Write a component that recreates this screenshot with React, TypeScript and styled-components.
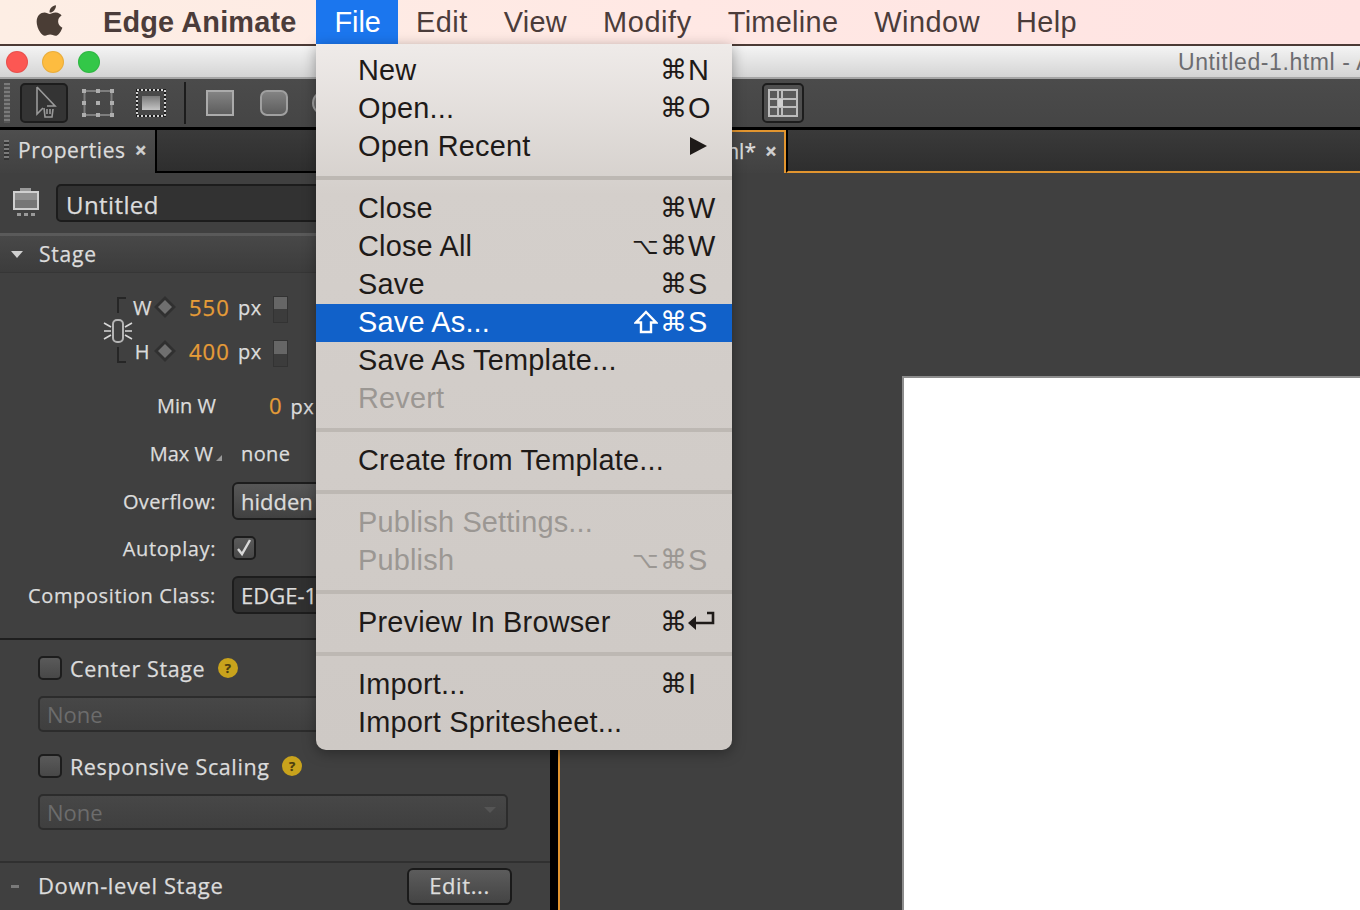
import React from "react";
import styled, { createGlobalStyle } from "styled-components";
import { FaApple } from "react-icons/fa";

const GlobalStyle = createGlobalStyle`
    html, body {
        margin: 0;
        padding: 0;
        background: #404040;
        overflow: hidden;
    }
`;

const Screen = styled.div`
    position: relative;
    width: 1360px;
    height: 910px;
    overflow: hidden;
    display: flex;
    flex-direction: column;
    font-family: "Liberation Sans", Arial, sans-serif;
`;

/* menu bar */
const MenuBar = styled.div`
    height: 44px;
    flex: none;
    display: flex;
    align-items: stretch;
    padding-left: 32px;
    background: linear-gradient(90deg, #fdeee4 0%, #ffe8e4 50%, #ffe3e2 100%);
    border-bottom: 2px solid #4b3a35;
    font-size: 28.9px;
    color: #4b3c3a;
`;

const AppleLogo = styled.span`
    width: 71px;
    padding-top: 3px;
    flex: none;
    color: #4a3d35;
    font-size: 35px;
    line-height: 38px;
`;

const AppName = styled.span`
    font-weight: 700;
    letter-spacing: 0.15px;
    line-height: 44px;
    margin-right: 20px;
`;

const MenuTitle = styled.span<{ $open?: boolean; $track?: number }>`
    padding: 0 ${(p) => (p.$open ? 17 : 18)}px 0 18px;
    line-height: 44px;
    letter-spacing: ${(p) => p.$track ?? 0}px;
    color: ${(p) => (p.$open ? "#fff" : "inherit")};
    background: ${(p) => (p.$open ? "#1b76ee" : "transparent")};
`;

/* window chrome */
const TitleBar = styled.div`
    height: 31px;
    flex: none;
    display: flex;
    align-items: center;
    gap: 14px;
    padding-left: 6px;
    background: linear-gradient(#f4f4f4, #d4d4d4);
    border-bottom: 2px solid #a5a5a5;
`;

const Light = styled.span<{ $color: string }>`
    width: 22px;
    height: 22px;
    flex: none;
    border-radius: 50%;
    background: ${(p) => p.$color};
    box-shadow: inset 0 0 0 1px rgba(0, 0, 0, 0.08);
`;

const WindowName = styled.span`
    margin: 2px 0 0 1064px;
    white-space: nowrap;
    font-size: 23px;
    letter-spacing: 0.6px;
    color: #6c6c70;
`;

const Toolbar = styled.div`
    height: 48px;
    flex: none;
    display: flex;
    align-items: center;
    background: linear-gradient(#4b4b4b, #454545);
    border-bottom: 3px solid #000;
`;

const Grip = styled.span`
    width: 6px;
    height: 40px;
    margin: 0 10px 0 4px;
    flex: none;
    background: repeating-linear-gradient(#7a7a7a 0 2px, #555 2px 4px);
`;

const ToolButton = styled.span<{ $width?: number }>`
    width: ${(p) => p.$width ?? 48}px;
    height: 40px;
    flex: none;
    display: flex;
    align-items: center;
    justify-content: center;
    border-radius: 5px;
    background: #343434;
    border: 2px solid #1d1d1d;
    box-sizing: border-box;
`;

const ToolIcon = styled.svg<{ $left: number }>`
    flex: none;
    margin-left: ${(p) => p.$left}px;
`;

const ToolDivider = styled.span`
    width: 2px;
    height: 42px;
    margin-left: 18px;
    flex: none;
    background: #1c1c1c;
`;

const GridButton = styled(ToolButton)`
    margin-left: 422px;
    background: #4f4f4f;
`;

/* panels */
const Workspace = styled.div`
    flex: 1;
    display: flex;
    min-height: 0;
`;

const LeftPanel = styled.div`
    width: 550px;
    flex: none;
    display: flex;
    flex-direction: column;
    background: #404040;
    color: #dcdcdc;
    font-family: "Open Sans", "Noto Sans", sans-serif;
    font-size: 20px;
    font-weight: 500;
    letter-spacing: 0.4px;
    -webkit-text-stroke: 0.25px;
`;

const PanelDivider = styled.div`
    width: 8px;
    flex: none;
    background: #000;
`;

const TabStrip = styled.div`
    height: 43px;
    flex: none;
    display: flex;
`;

const PropertiesTab = styled.div`
    width: 155px;
    flex: none;
    box-sizing: border-box;
    padding-bottom: 3px;
    display: flex;
    align-items: center;
    background: linear-gradient(#4e4e4e, #414141);
    font-size: 21px;
    letter-spacing: 0.6px;
`;

const TabGrip = styled.span`
    width: 5px;
    height: 20px;
    margin: 0 9px 0 4px;
    background: repeating-linear-gradient(#7a7a7a 0 2px, #333 2px 4px);
`;

const TabClose = styled.span`
    margin-left: 9px;
    font-size: 21px;
    font-weight: 700;
    color: #cfcfcf;
`;

const EmptyStrip = styled.div`
    flex: 1;
    background: linear-gradient(#3a3a3a, #2e2e2e);
    border-left: 2px solid #000;
    border-bottom: 2px solid #000;
`;

const NameRow = styled.div`
    height: 60px;
    flex: none;
    display: flex;
    align-items: center;
    padding-left: 11px;
    box-sizing: border-box;
`;

const NameField = styled.div`
    margin-left: 15px;
    flex: 1;
    height: 38px;
    box-sizing: border-box;
    padding-left: 8px;
    line-height: 38px;
    font-size: 24px;
    background: #323232;
    border: 2px solid #1c1c1c;
    border-radius: 5px;
`;

const SectionHeader = styled.div`
    height: 40px;
    flex: none;
    box-sizing: border-box;
    display: flex;
    align-items: center;
    background: linear-gradient(#484848, #3c3c3c);
    border-top: 3px solid #5a5a5a;
    border-bottom: 1px solid #363636;
    padding-left: 11px;
    font-size: 21px;
    letter-spacing: 0.8px;
`;

const Caret = styled.span`
    width: 0;
    height: 0;
    margin-right: 16px;
    border-left: 6px solid transparent;
    border-right: 6px solid transparent;
    border-top: 7px solid #d0d0d0;
`;

const StageForm = styled.div`
    flex: none;
    box-sizing: border-box;
    padding: 12px 0 19px;
    border-bottom: 2px solid #1e1e1e;
`;

const DimGroup = styled.div`
    display: flex;
    padding-left: 103px;
    margin-bottom: 8px;
`;

const DimRows = styled.div`
    display: flex;
    flex-direction: column;
`;

const DimRow = styled.div`
    height: 44px;
    display: grid;
    grid-template-columns: 17px 39px 49px 35px 16px;
    align-items: center;
`;

const DimLabel = styled.span`
    text-align: right;
`;

const DimDiamond = styled.svg`
    margin-left: 4px;
`;

const Value = styled.span`
    color: #e59c38;
    font-size: 22px;
    letter-spacing: 1px;
    -webkit-text-stroke: 0.25px #e59c38;
`;

const Spinner = styled.span`
    width: 15px;
    height: 27px;
    margin-top: 4px;
    background: linear-gradient(#666 0 50%, #3c3c3c 50% 100%);
    border: 1px solid #333;
    box-sizing: border-box;
`;

const FormRow = styled.div<{ $height?: number }>`
    height: ${(p) => p.$height ?? 48}px;
    display: flex;
    align-items: center;
`;

const FormLabel = styled.span<{ $track: number }>`
    width: 216px;
    flex: none;
    text-align: right;
    white-space: nowrap;
    letter-spacing: ${(p) => p.$track}px;
`;

const MaxMark = styled.span`
    display: inline-block;
    width: 0;
    height: 0;
    margin: 0 -6px 0 3px;
    border-left: 6px solid transparent;
    border-bottom: 6px solid #9a9a9a;
`;

const PlainValue = styled.span<{ $gap: number }>`
    margin-left: ${(p) => p.$gap}px;
    white-space: nowrap;
`;

const Unit = styled.span`
    margin-left: 8px;
`;

const FormSelect = styled.div<{ $dark?: boolean }>`
    margin-left: 16px;
    flex: none;
    width: 278px;
    height: 38px;
    box-sizing: border-box;
    padding-left: 7px;
    line-height: 34px;
    font-size: 22px;
    letter-spacing: 0;
    border: 2px solid #1d1d1d;
    border-radius: 6px;
    background: ${(p) => (p.$dark ? "#303030" : "linear-gradient(#575757, #414141)")};
`;

const CheckBox = styled.span`
    width: 24px;
    height: 24px;
    flex: none;
    display: flex;
    align-items: center;
    justify-content: center;
    box-sizing: border-box;
    border: 2px solid #1d1d1d;
    border-radius: 5px;
    background: linear-gradient(#5a5a5a, #484848);
`;

const AutoplayBox = styled(CheckBox)`
    margin-left: 16px;
`;

const Options = styled.div`
    flex: 1;
    padding-left: 38px;
    padding-right: 42px;
    font-size: 21.5px;
    letter-spacing: 0.6px;
`;

const OptionRow = styled.div<{ $top: number }>`
    display: flex;
    align-items: center;
    gap: 8px;
    height: 24px;
    white-space: nowrap;
    margin-top: ${(p) => p.$top}px;
`;

const HelpBadge = styled.span`
    width: 20px;
    height: 20px;
    margin-left: 5px;
    flex: none;
    border-radius: 50%;
    background: #c9a31c;
    color: #4a3c10;
    font-size: 13px;
    font-weight: 700;
    line-height: 20px;
    text-align: center;
`;

const DisabledSelect = styled.div<{ $top: number }>`
    position: relative;
    height: 36px;
    margin-top: ${(p) => p.$top}px;
    box-sizing: border-box;
    padding-left: 7px;
    line-height: 33px;
    font-size: 22px;
    letter-spacing: 0;
    color: #6c6c6c;
    -webkit-text-stroke: 0;
    background: linear-gradient(#474747, #3f3f3f);
    border: 2px solid #2c2c2c;
    border-radius: 5px;
`;

const FaintCaret = styled.span`
    position: absolute;
    right: 10px;
    top: 11px;
    width: 0;
    height: 0;
    border-left: 6px solid transparent;
    border-right: 6px solid transparent;
    border-top: 6px solid #555;
`;

const FooterSection = styled.div`
    height: 49px;
    flex: none;
    box-sizing: border-box;
    display: flex;
    align-items: center;
    justify-content: space-between;
    padding: 0 38px 0 11px;
    border-top: 2px solid #303030;
    font-size: 22px;
    letter-spacing: 0.6px;
`;

const FooterTitle = styled.span`
    display: flex;
    align-items: center;
    margin-top: -3px;
`;

const Bullet = styled.span`
    width: 8px;
    height: 3px;
    margin: 3px 19px 0 0;
    background: #7a7a7a;
`;

const EditButton = styled.span`
    width: 105px;
    height: 37px;
    box-sizing: border-box;
    border: 2px solid #1a1a1a;
    border-radius: 6px;
    text-align: center;
    line-height: 31px;
    background: linear-gradient(#5c5c5c, #444);
`;

const RightPanel = styled.div`
    flex: 1;
    min-width: 0;
    display: flex;
    flex-direction: column;
    background: #404040;
`;

const DocStrip = styled.div`
    height: 43px;
    flex: none;
    display: flex;
`;

const DocTab = styled.div`
    width: 228px;
    flex: none;
    box-sizing: border-box;
    display: flex;
    align-items: center;
    justify-content: flex-end;
    padding: 0 7px 3px 0;
    white-space: nowrap;
    color: #dcdcdc;
    font-family: "Open Sans", "Noto Sans", sans-serif;
    font-size: 21px;
    font-weight: 500;
    -webkit-text-stroke: 0.25px;
    border: 2px solid #e2952f;
    border-bottom: none;
    background: linear-gradient(#4d4d4d, #414141);
`;

const DocEmpty = styled.div`
    flex: 1;
    background: linear-gradient(#3a3a3a, #2e2e2e);
    border-left: 2px solid #000;
    border-bottom: 2px solid #e2952f;
`;

const Canvas = styled.div`
    flex: 1;
    min-height: 0;
    padding: 203px 0 0 342px;
    border-left: 2px solid #e2952f;
    background: #404040;
`;

const StagePaper = styled.div`
    height: 100%;
    background: #fff;
    border-top: 2px solid #8d8d8d;
    border-left: 2px solid #8d8d8d;
`;

/* the open File menu */
const FileMenu = styled.div`
    position: absolute;
    left: 316px;
    top: 44px;
    width: 416px;
    height: 706px;
    box-sizing: border-box;
    padding: 8px 0 8px;
    border-radius: 0 0 10px 10px;
    background: linear-gradient(#efebe9 0, #d4cfcb 150px, #cec9c5 100%);
    box-shadow: 0 3px 14px rgba(0, 0, 0, 0.35);
    color: #1e1a18;
    font-size: 28.9px;
`;

const MenuSeparator = styled.div`
    height: 4px;
    margin: 10px 0;
    background: #bdb8b3;
`;

const MenuRow = styled.div<{ $active?: boolean; $disabled?: boolean }>`
    height: 38px;
    box-sizing: border-box;
    display: flex;
    justify-content: space-between;
    align-items: center;
    padding: 0 0 2px 42px;
    white-space: nowrap;
    letter-spacing: 0.2px;
    background: ${(p) => (p.$active ? "#1161c9" : "transparent")};
    color: ${(p) => (p.$active ? "#fff" : p.$disabled ? "#9b9793" : "inherit")};
`;

const Keys = styled.span`
    width: 100px;
    flex: none;
    display: grid;
    grid-template-columns: 28px 28px 1fr;
    align-items: center;
    letter-spacing: 0;
`;

const CommandKey = styled.span`
    font-family: "DejaVu Sans", sans-serif;
    font-size: 27px;
    line-height: 30px;
`;

const OptionKey = styled(CommandKey)`
    font-size: 23px;
`;

const ShiftGlyph = styled.svg`
    margin-left: 2px;
`;

const MenuCaret = styled.span`
    width: 0;
    height: 0;
    margin-left: 2px;
    border-top: 9px solid transparent;
    border-bottom: 9px solid transparent;
    border-left: 17px solid #1e1a18;
`;

const StageIcon = () => (
    <svg width="30" height="32" viewBox="0 0 30 32">
        <rect x="9" y="1" width="11" height="3" fill="#9a9a9a" />
        <rect x="2" y="4" width="26" height="19" fill="#d0d0d0" />
        <rect x="4" y="6" width="22" height="15" fill="#777" />
        <rect x="4" y="6" width="22" height="7" fill="#8f8f8f" />
        <rect x="6" y="26" width="4" height="3" fill="#9a9a9a" />
        <rect x="13" y="26" width="4" height="3" fill="#9a9a9a" />
        <rect x="20" y="26" width="4" height="3" fill="#9a9a9a" />
    </svg>
);

const LinkIcon = () => (
    <svg width="30" height="88" viewBox="0 0 30 88" fill="none">
        <path d="M23 13H15V28M15 62V77H23" stroke="#262626" strokeWidth="2" />
        <rect x="10" y="35" width="10" height="22" rx="4" stroke="#b4b4b4" strokeWidth="2" />
        <path d="M1 38l7 4M1 46h7M1 54l7-4M29 38l-7 4M29 46h-7M29 54l-7-4" stroke="#d8d8d8" strokeWidth="1.6" />
    </svg>
);

const DiamondIcon = () => (
    <DimDiamond width="22" height="24" viewBox="0 0 22 24">
        <path d="M11 1l11 11-11 11L0 12z" fill="#303030" />
        <path d="M11 5l7 7-7 7-7-7z" fill="#6f6f6f" />
    </DimDiamond>
);

const CheckIcon = () => (
    <svg width="20" height="20" viewBox="0 0 20 20" fill="none">
        <path d="M4 11l4 5 8-14" stroke="#d8d8d8" strokeWidth="2.4" />
    </svg>
);

const ReturnIcon = () => (
    <svg width="27" height="22" viewBox="0 0 27 22" fill="none">
        <path d="M19 2h6v10H6" stroke="#1e1a18" strokeWidth="2.6" />
        <path d="M0 12l8-7v14z" fill="#1e1a18" />
    </svg>
);

const ShiftIcon = () => (
    <ShiftGlyph width="24" height="24" viewBox="0 0 24 24" fill="none">
        <path d="M12 2L22 12.5H17V22H7V12.5H2Z" stroke="currentColor" strokeWidth="2.4" />
    </ShiftGlyph>
);

type MenuItem = {
    label: string;
    option?: boolean;
    shift?: boolean;
    command?: boolean;
    keyName?: string;
    submenu?: boolean;
    returnKey?: boolean;
    active?: boolean;
    disabled?: boolean;
};

const menuGroups: MenuItem[][] = [
    [
        { label: "New", command: true, keyName: "N" },
        { label: "Open...", command: true, keyName: "O" },
        { label: "Open Recent", submenu: true },
    ],
    [
        { label: "Close", command: true, keyName: "W" },
        { label: "Close All", option: true, command: true, keyName: "W" },
        { label: "Save", command: true, keyName: "S" },
        { label: "Save As...", shift: true, command: true, keyName: "S", active: true },
        { label: "Save As Template..." },
        { label: "Revert", disabled: true },
    ],
    [{ label: "Create from Template..." }],
    [
        { label: "Publish Settings...", disabled: true },
        { label: "Publish", option: true, command: true, keyName: "S", disabled: true },
    ],
    [{ label: "Preview In Browser", command: true, returnKey: true }],
    [
        { label: "Import...", command: true, keyName: "I" },
        { label: "Import Spritesheet..." },
    ],
];

const menuTitles = [
    { label: "Edit", track: 0.5 },
    { label: "View", track: 0.3 },
    { label: "Modify", track: 0.6 },
    { label: "Timeline", track: 0.3 },
    { label: "Window", track: 0.5 },
    { label: "Help", track: 0.4 },
];

const MenuEntry = ({ item }: { item: MenuItem }) => (
    <MenuRow $active={item.active} $disabled={item.disabled}>
        <span>{item.label}</span>
        <Keys>
            {item.shift ? <ShiftIcon /> : <OptionKey>{item.option ? "⌥" : ""}</OptionKey>}
            <CommandKey>{item.command ? "⌘" : ""}</CommandKey>
            {item.submenu && <MenuCaret />}
            {item.returnKey && <ReturnIcon />}
            {item.keyName && <span>{item.keyName}</span>}
        </Keys>
    </MenuRow>
);

export default function App() {
    return (
        <Screen>
            <GlobalStyle />
            <MenuBar>
                <AppleLogo><FaApple /></AppleLogo>
                <AppName>Edge Animate</AppName>
                <MenuTitle $open>File</MenuTitle>
                {menuTitles.map((t) => <MenuTitle key={t.label} $track={t.track}>{t.label}</MenuTitle>)}
            </MenuBar>
            <TitleBar>
                <Light $color="#fc5753" />
                <Light $color="#fdbc40" />
                <Light $color="#33c748" />
                <WindowName>Untitled-1.html - Adobe Edge Animate</WindowName>
            </TitleBar>
            <Toolbar>
                <Grip />
                <ToolButton>
                    <svg width="28" height="34" viewBox="0 0 28 34" fill="none" stroke="#999" strokeWidth="1.6">
                        <path d="M7 1V28l6-6M7 1L25 20h-8" />
                        <path d="M14 22l1 9h7l1-8M17 23v5M20 23v5" />
                    </svg>
                </ToolButton>
                <ToolIcon $left={14} width="32" height="30" viewBox="0 0 32 30" fill="none">
                    <rect x="2.5" y="3" width="27" height="24" stroke="#7e7e7e" strokeWidth="2" />
                    <path d="M0 1h4v4H0zM14 1h4v4h-4zM28 1h4v4h-4zM0 13h4v4H0zM14 13h4v4h-4zM28 13h4v4h-4zM0 25h4v4H0zM14 25h4v4h-4zM28 25h4v4h-4z" fill="#aeaeae" />
                </ToolIcon>
                <ToolIcon $left={22} width="30" height="28" viewBox="0 0 30 28" fill="none">
                    <defs>
                        <linearGradient id="toolFill" x1="0" y1="0" x2="0" y2="1">
                            <stop offset="0" stopColor="#858585" />
                            <stop offset="1" stopColor="#5c5c5c" />
                        </linearGradient>
                        <linearGradient id="marqueeFill" x1="0" y1="0" x2="0" y2="1">
                            <stop offset="0" stopColor="#7a7a7a" />
                            <stop offset="1" stopColor="#c4c4c4" />
                        </linearGradient>
                    </defs>
                    <rect x="1" y="1" width="28" height="26" stroke="#1a1a1a" strokeWidth="2" />
                    <rect x="1" y="1" width="28" height="26" stroke="#d0d0d0" strokeWidth="2" strokeDasharray="2 2" />
                    <rect x="6" y="7" width="18" height="14" fill="url(#marqueeFill)" />
                </ToolIcon>
                <ToolDivider />
                <ToolIcon $left={20} width="28" height="26" viewBox="0 0 28 26">
                    <rect x="1" y="1" width="26" height="24" fill="url(#toolFill)" stroke="#ababab" strokeWidth="2" />
                </ToolIcon>
                <ToolIcon $left={26} width="28" height="26" viewBox="0 0 28 26">
                    <rect x="1" y="1" width="26" height="24" rx="6" fill="url(#toolFill)" stroke="#a0a0a0" strokeWidth="2" />
                </ToolIcon>
                <ToolIcon $left={24} width="28" height="26" viewBox="0 0 28 26">
                    <ellipse cx="14" cy="13" rx="13" ry="12" fill="url(#toolFill)" stroke="#a0a0a0" strokeWidth="2" />
                </ToolIcon>
                <GridButton $width={42}>
                    <svg width="30" height="28" viewBox="0 0 30 28" fill="none">
                        <rect x="1" y="1" width="28" height="26" fill="#5a5a5a" stroke="#bdbdbd" strokeWidth="2" />
                        <path d="M10 1v26M14 1v26M1 10h28M1 18h28" stroke="#bdbdbd" strokeWidth="2" />
                        <rect x="10" y="10" width="5" height="8" fill="#d0d0d0" />
                    </svg>
                </GridButton>
            </Toolbar>
            <Workspace>
                <LeftPanel>
                    <TabStrip>
                        <PropertiesTab>
                            <TabGrip />
                            Properties
                            <TabClose>×</TabClose>
                        </PropertiesTab>
                        <EmptyStrip />
                    </TabStrip>
                    <NameRow>
                        <StageIcon />
                        <NameField>Untitled</NameField>
                    </NameRow>
                    <SectionHeader>
                        <Caret />
                        Stage
                    </SectionHeader>
                    <StageForm>
                        <DimGroup>
                            <LinkIcon />
                            <DimRows>
                                <DimRow>
                                    <DimLabel>W</DimLabel>
                                    <DiamondIcon />
                                    <Value>550</Value>
                                    <span>px</span>
                                    <Spinner />
                                </DimRow>
                                <DimRow>
                                    <DimLabel>H</DimLabel>
                                    <DiamondIcon />
                                    <Value>400</Value>
                                    <span>px</span>
                                    <Spinner />
                                </DimRow>
                            </DimRows>
                        </DimGroup>
                        <FormRow>
                            <FormLabel $track={0}>Min W</FormLabel>
                            <PlainValue $gap={53}><Value>0</Value><Unit>px</Unit></PlainValue>
                        </FormRow>
                        <FormRow>
                            <FormLabel $track={0}>Max W<MaxMark /></FormLabel>
                            <PlainValue $gap={25}>none</PlainValue>
                        </FormRow>
                        <FormRow>
                            <FormLabel $track={0.4}>Overflow:</FormLabel>
                            <FormSelect>hidden</FormSelect>
                        </FormRow>
                        <FormRow $height={46}>
                            <FormLabel $track={0.6}>Autoplay:</FormLabel>
                            <AutoplayBox><CheckIcon /></AutoplayBox>
                        </FormRow>
                        <FormRow>
                            <FormLabel $track={0.62}>Composition Class:</FormLabel>
                            <FormSelect $dark>EDGE-1</FormSelect>
                        </FormRow>
                    </StageForm>
                    <Options>
                        <OptionRow $top={16}>
                            <CheckBox />
                            Center Stage
                            <HelpBadge>?</HelpBadge>
                        </OptionRow>
                        <DisabledSelect $top={16}>None</DisabledSelect>
                        <OptionRow $top={22}>
                            <CheckBox />
                            Responsive Scaling
                            <HelpBadge>?</HelpBadge>
                        </OptionRow>
                        <DisabledSelect $top={16}>
                            None
                            <FaintCaret />
                        </DisabledSelect>
                    </Options>
                    <FooterSection>
                        <FooterTitle>
                            <Bullet />
                            Down-level Stage
                        </FooterTitle>
                        <EditButton>Edit...</EditButton>
                    </FooterSection>
                </LeftPanel>
                <PanelDivider />
                <RightPanel>
                    <DocStrip>
                        <DocTab>
                            Untitled-1.html*
                            <TabClose>×</TabClose>
                        </DocTab>
                        <DocEmpty />
                    </DocStrip>
                    <Canvas>
                        <StagePaper />
                    </Canvas>
                </RightPanel>
            </Workspace>
            <FileMenu>
                {menuGroups.map((group, i) => (
                    <React.Fragment key={group[0].label}>
                        {i > 0 && <MenuSeparator />}
                        {group.map((item) => <MenuEntry key={item.label} item={item} />)}
                    </React.Fragment>
                ))}
            </FileMenu>
        </Screen>
    );
}
